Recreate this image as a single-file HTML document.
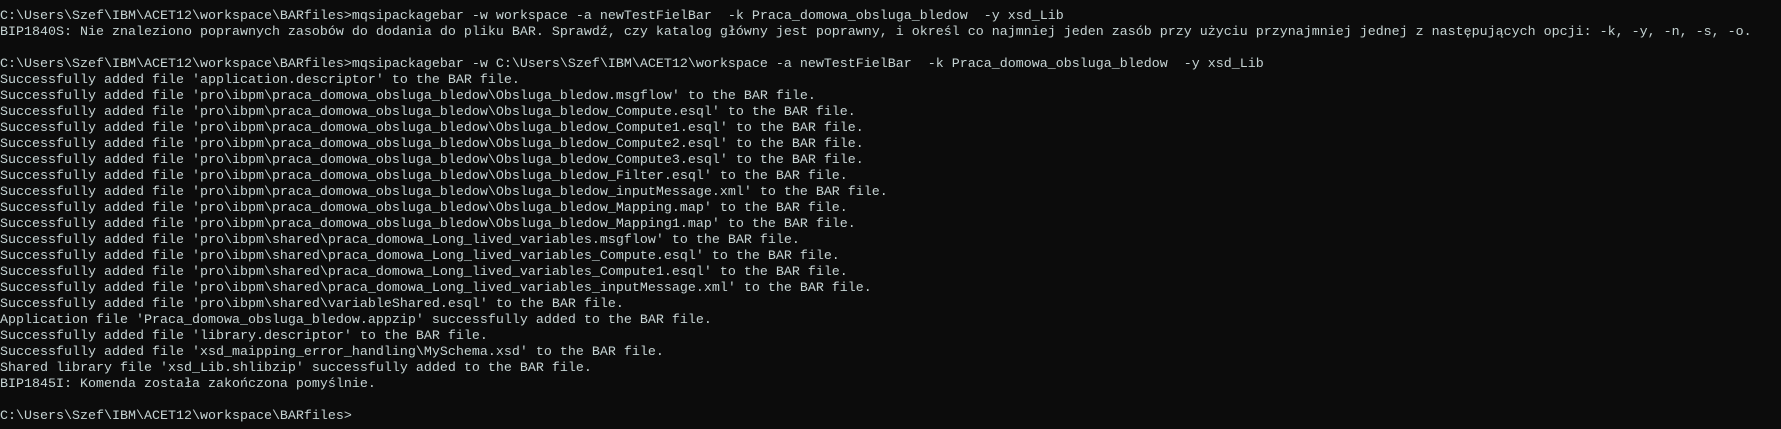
<!DOCTYPE html>
<html><head><meta charset="utf-8"><style>
html,body{margin:0;padding:0;background:#0c0c0c;width:1781px;height:429px;overflow:hidden}
pre{margin:0;padding:8.5px 0 0 0;font-family:"Liberation Mono",monospace;font-size:13.333px;line-height:16px;color:#c6d4d4;white-space:pre}
</style></head><body><pre>C:\Users\Szef\IBM\ACET12\workspace\BARfiles>mqsipackagebar -w workspace -a newTestFielBar  -k Praca_domowa_obsluga_bledow  -y xsd_Lib
BIP1840S: Nie znaleziono poprawnych zasobów do dodania do pliku BAR. Sprawdź, czy katalog główny jest poprawny, i określ co najmniej jeden zasób przy użyciu przynajmniej jednej z następujących opcji: -k, -y, -n, -s, -o.

C:\Users\Szef\IBM\ACET12\workspace\BARfiles>mqsipackagebar -w C:\Users\Szef\IBM\ACET12\workspace -a newTestFielBar  -k Praca_domowa_obsluga_bledow  -y xsd_Lib
Successfully added file 'application.descriptor' to the BAR file.
Successfully added file 'pro\ibpm\praca_domowa_obsluga_bledow\Obsluga_bledow.msgflow' to the BAR file.
Successfully added file 'pro\ibpm\praca_domowa_obsluga_bledow\Obsluga_bledow_Compute.esql' to the BAR file.
Successfully added file 'pro\ibpm\praca_domowa_obsluga_bledow\Obsluga_bledow_Compute1.esql' to the BAR file.
Successfully added file 'pro\ibpm\praca_domowa_obsluga_bledow\Obsluga_bledow_Compute2.esql' to the BAR file.
Successfully added file 'pro\ibpm\praca_domowa_obsluga_bledow\Obsluga_bledow_Compute3.esql' to the BAR file.
Successfully added file 'pro\ibpm\praca_domowa_obsluga_bledow\Obsluga_bledow_Filter.esql' to the BAR file.
Successfully added file 'pro\ibpm\praca_domowa_obsluga_bledow\Obsluga_bledow_inputMessage.xml' to the BAR file.
Successfully added file 'pro\ibpm\praca_domowa_obsluga_bledow\Obsluga_bledow_Mapping.map' to the BAR file.
Successfully added file 'pro\ibpm\praca_domowa_obsluga_bledow\Obsluga_bledow_Mapping1.map' to the BAR file.
Successfully added file 'pro\ibpm\shared\praca_domowa_Long_lived_variables.msgflow' to the BAR file.
Successfully added file 'pro\ibpm\shared\praca_domowa_Long_lived_variables_Compute.esql' to the BAR file.
Successfully added file 'pro\ibpm\shared\praca_domowa_Long_lived_variables_Compute1.esql' to the BAR file.
Successfully added file 'pro\ibpm\shared\praca_domowa_Long_lived_variables_inputMessage.xml' to the BAR file.
Successfully added file 'pro\ibpm\shared\variableShared.esql' to the BAR file.
Application file 'Praca_domowa_obsluga_bledow.appzip' successfully added to the BAR file.
Successfully added file 'library.descriptor' to the BAR file.
Successfully added file 'xsd_maipping_error_handling\MySchema.xsd' to the BAR file.
Shared library file 'xsd_Lib.shlibzip' successfully added to the BAR file.
BIP1845I: Komenda została zakończona pomyślnie.

C:\Users\Szef\IBM\ACET12\workspace\BARfiles></pre></body></html>
